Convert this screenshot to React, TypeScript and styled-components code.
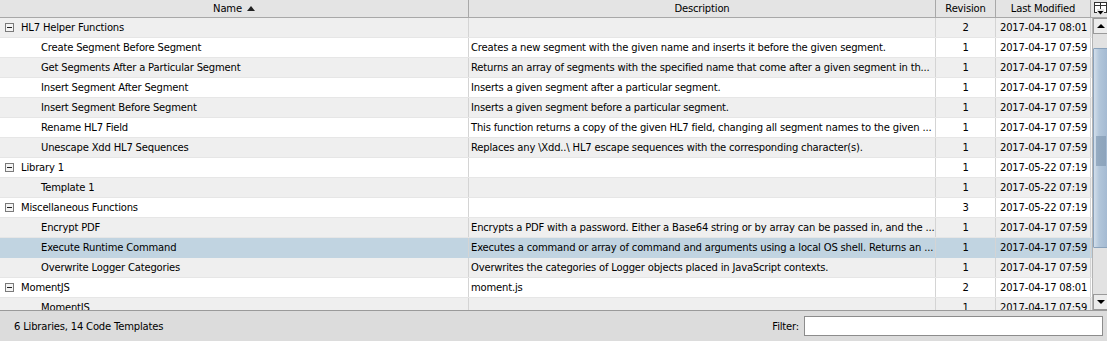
import React from "react"
import styled, { createGlobalStyle } from "styled-components"

const GlobalStyle = createGlobalStyle`
  html, body {
    margin: 0;
    padding: 0;
    background: #dcdcdc;
    overflow: hidden;
  }
  body {
    font-family: "DejaVu Sans", "Liberation Sans", sans-serif;
    font-size: 10px;
    letter-spacing: -0.18px;
    color: #000;
  }
`

const COLS = "469px 467px 60px 95px"

const Frame = styled.div`
  width: 1107px;
  height: 341px;
  display: flex;
  flex-direction: column;
`

const TableArea = styled.div`
  height: 310px;
  display: grid;
  grid-template-columns: 1091px 16px;
  grid-template-rows: 18px 1fr;
  border-left: 1px solid #8a8a8a;
  box-sizing: border-box;
  background: #fff;
`

const Header = styled.div`
  display: grid;
  grid-template-columns: ${COLS};
  margin-left: -1px;
  background: #e4e4e4;
  border-bottom: 1px solid #a8a8a8;
  box-sizing: border-box;
`

const HeaderCell = styled.div`
  display: flex;
  align-items: center;
  justify-content: center;
  gap: 5px;
  border-right: 1px solid #a8a8a8;
  line-height: 17px;
`

const SortArrow = styled.span`
  width: 0;
  height: 0;
  border-left: 4px solid transparent;
  border-right: 4px solid transparent;
  border-bottom: 5px solid #222;
  margin-top: -1px;
`

const Corner = styled.div`
  background: #e4e4e4;
  border-bottom: 1px solid #a8a8a8;
  box-sizing: border-box;
  display: flex;
  align-items: center;
  justify-content: center;
`

const Body = styled.div`
  overflow: hidden;
  margin-left: -1px;
`

const Row = styled.div<{ $alt: boolean; $selected: boolean }>`
  display: grid;
  grid-template-columns: ${COLS};
  height: 20px;
  box-sizing: border-box;
  border-bottom: 1px solid ${p => (p.$selected ? "#c1d4e1" : "#e6e6e6")};
  background: ${p => (p.$selected ? "#c1d4e1" : p.$alt ? "#efefef" : "#ffffff")};
`

const Cell = styled.div<{ $align?: "left" | "center" }>`
  display: flex;
  align-items: center;
  justify-content: ${p => (p.$align === "center" ? "center" : "flex-start")};
  padding: 0 2px;
  border-right: 1px solid #d4d4d4;
  white-space: nowrap;
  overflow: hidden;
`

const NameCell = styled(Cell)<{ $group: boolean }>`
  padding-left: ${p => (p.$group ? "5px" : "41px")};
  gap: 7px;
`

const Expander = styled.span`
  width: 9px;
  height: 9px;
  box-sizing: border-box;
  border: 1px solid #7a7a7a;
  background: #f4f4f4;
  display: flex;
  align-items: center;
  justify-content: center;

  &:after {
    content: "";
    width: 5px;
    height: 1px;
    background: #222;
  }
`

const DateCell = styled(Cell)`
  padding-left: 4px;
`

const ScrollBar = styled.div`
  display: flex;
  flex-direction: column;
  background: #e2e2e2;
  border-left: 1px solid #b4b4b4;
`

const ScrollButton = styled.div`
  height: 16px;
  flex: none;
  box-sizing: border-box;
  border: 1px solid #9a9a9a;
  background: #ececec;
  display: flex;
  align-items: center;
  justify-content: center;
`

const Arrow = styled.span<{ $dir: "up" | "down" }>`
  width: 0;
  height: 0;
  border-left: 4px solid transparent;
  border-right: 4px solid transparent;
  ${p => (p.$dir === "up" ? "border-bottom: 4px solid #000;" : "border-top: 4px solid #000;")}
`

const Track = styled.div`
  flex: 1;
  display: flex;
  flex-direction: column;
  padding-top: 14px;
`

const Thumb = styled.div`
  height: 200px;
  box-sizing: border-box;
  border: 1px solid #8aa2bb;
  border-radius: 1px;
  background: linear-gradient(to right, #d2deea, #b2c6da 40%, #a4bad2);
  display: flex;
  align-items: center;
  justify-content: center;
  padding-top: 6px;
`

const Grip = styled.div`
  width: 10px;
  height: 30px;
  background-image: radial-gradient(circle, #7f97b0 0.6px, transparent 0.9px);
  background-size: 2px 2px;
`

const StatusBar = styled.div`
  flex: 1;
  display: flex;
  align-items: center;
  justify-content: space-between;
  padding: 0 4px 0 14px;
  border-top: 1px solid #9a9a9a;
  background: #dcdcdc;
`

const FilterBox = styled.label`
  display: flex;
  align-items: center;
  gap: 5px;
`

const FilterInput = styled.input`
  width: 299px;
  height: 20px;
  box-sizing: border-box;
  border: 1px solid #8c8c8c;
  background: #fff;
  outline: none;
  font: inherit;
`

const ColumnIcon = () => (
  <svg width="13" height="14" viewBox="0 0 13 14">
    <rect x="0.5" y="0.5" width="12" height="10" fill="#fff" stroke="#333" />
    <line x1="0.5" y1="3.5" x2="12.5" y2="3.5" stroke="#333" />
    <line x1="6.5" y1="0.5" x2="6.5" y2="10" stroke="#333" />
    <rect x="3" y="7" width="7" height="7" fill="#e4e4e4" />
    <path d="M3.5 9 L9.5 9 L6.5 12.5 Z" fill="#000" />
  </svg>
)

interface Item {
  name: string
  description: string
  revision: number
  modified: string
  group?: boolean
  selected?: boolean
}

const items: Item[] = [
  { name: "HL7 Helper Functions", description: "", revision: 2, modified: "2017-04-17 08:01", group: true },
  { name: "Create Segment Before Segment", description: "Creates a new segment with the given name and inserts it before the given segment.", revision: 1, modified: "2017-04-17 07:59" },
  { name: "Get Segments After a Particular Segment", description: "Returns an array of segments with the specified name that come after a given segment in th...", revision: 1, modified: "2017-04-17 07:59" },
  { name: "Insert Segment After Segment", description: "Inserts a given segment after a particular segment.", revision: 1, modified: "2017-04-17 07:59" },
  { name: "Insert Segment Before Segment", description: "Inserts a given segment before a particular segment.", revision: 1, modified: "2017-04-17 07:59" },
  { name: "Rename HL7 Field", description: "This function returns a copy of the given HL7 field, changing all segment names to the given ...", revision: 1, modified: "2017-04-17 07:59" },
  { name: "Unescape Xdd HL7 Sequences", description: "Replaces any \\Xdd..\\ HL7 escape sequences with the corresponding character(s).", revision: 1, modified: "2017-04-17 07:59" },
  { name: "Library 1", description: "", revision: 1, modified: "2017-05-22 07:19", group: true },
  { name: "Template 1", description: "", revision: 1, modified: "2017-05-22 07:19" },
  { name: "Miscellaneous Functions", description: "", revision: 3, modified: "2017-05-22 07:19", group: true },
  { name: "Encrypt PDF", description: "Encrypts a PDF with a password. Either a Base64 string or by array can be passed in, and the ...", revision: 1, modified: "2017-04-17 07:59" },
  { name: "Execute Runtime Command", description: "Executes a command or array of command and arguments using a local OS shell. Returns an ...", revision: 1, modified: "2017-04-17 07:59", selected: true },
  { name: "Overwrite Logger Categories", description: "Overwrites the categories of Logger objects placed in JavaScript contexts.", revision: 1, modified: "2017-04-17 07:59" },
  { name: "MomentJS", description: "moment.js", revision: 2, modified: "2017-04-17 08:01", group: true },
  { name: "MomentJS", description: "", revision: 1, modified: "2017-04-17 07:59" },
]

const App = () => (
  <Frame>
    <GlobalStyle />
    <TableArea>
      <Header>
        <HeaderCell>Name <SortArrow /></HeaderCell>
        <HeaderCell>Description</HeaderCell>
        <HeaderCell>Revision</HeaderCell>
        <HeaderCell>Last Modified</HeaderCell>
      </Header>
      <Corner>
        <ColumnIcon />
      </Corner>
      <Body>
        {items.map((item, i) => (
          <Row key={i} $alt={i % 2 === 0} $selected={!!item.selected}>
            <NameCell $group={!!item.group}>
              {item.group && <Expander />}
              {item.name}
            </NameCell>
            <Cell>{item.description}</Cell>
            <Cell $align="center">{item.revision}</Cell>
            <DateCell>{item.modified}</DateCell>
          </Row>
        ))}
      </Body>
      <ScrollBar>
        <ScrollButton><Arrow $dir="up" /></ScrollButton>
        <Track>
          <Thumb><Grip /></Thumb>
        </Track>
        <ScrollButton><Arrow $dir="down" /></ScrollButton>
      </ScrollBar>
    </TableArea>
    <StatusBar>
      <span>6 Libraries, 14 Code Templates</span>
      <FilterBox>
        Filter:
        <FilterInput />
      </FilterBox>
    </StatusBar>
  </Frame>
)

export default App
